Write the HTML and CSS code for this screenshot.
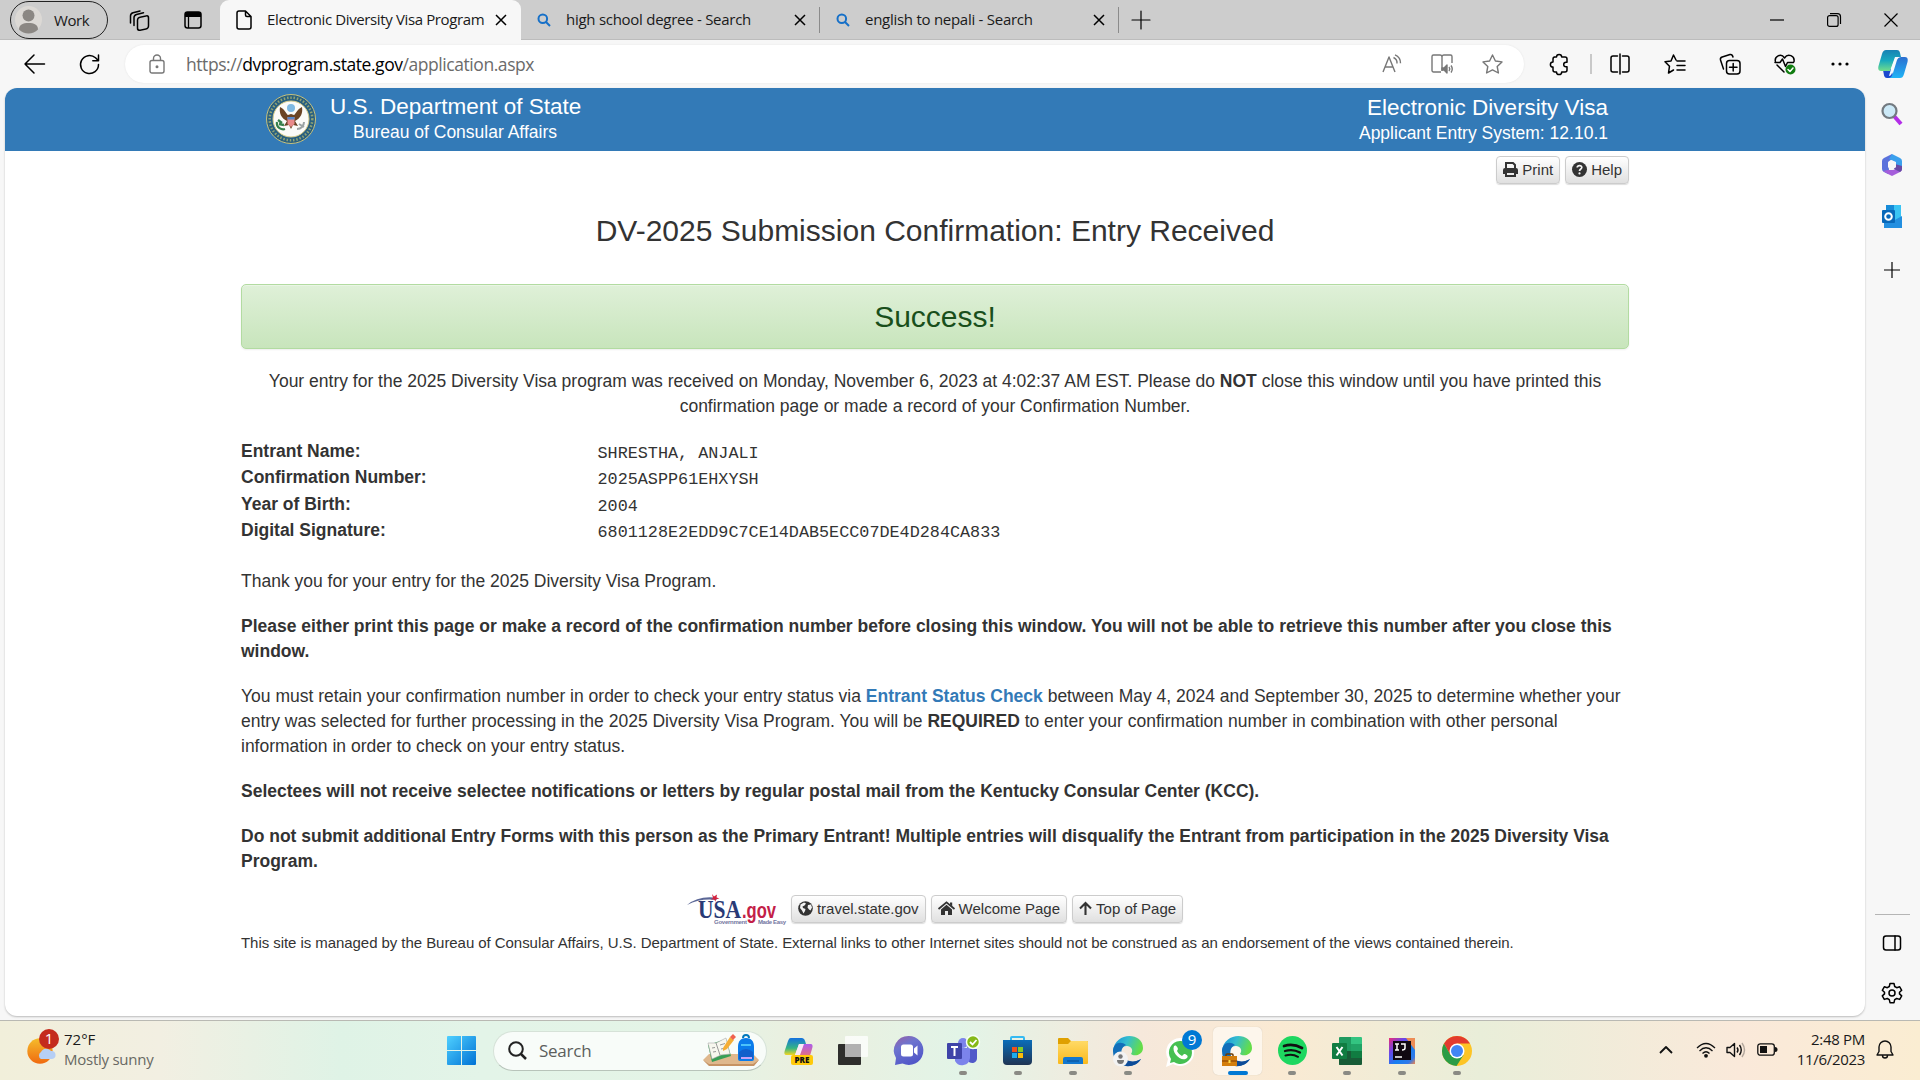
FILE: index.html
```html
<!DOCTYPE html>
<html lang="en">
<head>
<meta charset="utf-8">
<title>Electronic Diversity Visa Program</title>
<link rel="stylesheet" href="styles.css">
</head>
<body>
<div class="desktop">
  <header class="tabbar">
    <div class="profile">
      <svg width="27" height="27" viewBox="0 0 27 27"><circle cx="13.500" cy="13.500" r="13.500" fill="#dcd9d5"/><circle cx="13.500" cy="9.500" r="6" fill="#8b8783"/><path d="M4 23.500c0-5 4-6.500 9.500-6.500s9.500 1.500 9.500 6.500a13.500 13.500 0 0 1-19 0z" fill="#8b8783"/></svg>
      <span>Work</span>
    </div>
    <svg class="workspaces line" width="22" height="20" viewBox="0 0 22 20"><rect x="8.500" y="6" width="11" height="13" rx="2.500" transform="skewY(-12) translate(0 3.500)"/><path d="M5 15.500V7.500c0-1.500 1-2.500 2.500-3l7-1.700M1.500 13V6c0-1.500 1-2.700 2.500-3.200l7-1.800" /></svg>
    <svg class="tabmenu" width="18" height="18" viewBox="0 0 18 18"><rect x="1" y="1" width="16" height="16" rx="2.500" fill="none" stroke="#000" stroke-width="1.500"/><path d="M1 3a2 2 0 0 1 2-2h12a2 2 0 0 1 2 2v3H1z"/><path d="M4.500 6v11" stroke="#000" stroke-width="1.300"/></svg>
    <div class="tab active">
      <svg class="line" width="16" height="20" viewBox="0 0 16 20"><path d="M3 1h6.500L15 6.500V17a2 2 0 0 1-2 2H3a2 2 0 0 1-2-2V3a2 2 0 0 1 2-2zM9.500 1v4a1.500 1.500 0 0 0 1.500 1.500h4"/></svg>
      <span class="t1">Electronic Diversity Visa Program</span>
      <svg class="close" width="12" height="12" viewBox="0 0 12 12"><path d="M1 1l10 10M11 1L1 11"/></svg>
    </div>
    <div class="tab">
      <svg class="lens" width="14" height="14" viewBox="0 0 14 14"><circle cx="5.800" cy="5.800" r="4.300"/><path d="M9 9l4 4"/></svg>
      <span class="t2">high school degree - Search</span>
      <svg class="close" width="12" height="12" viewBox="0 0 12 12"><path d="M1 1l10 10M11 1L1 11"/></svg>
    </div>
    <div class="tab">
      <svg class="lens" width="14" height="14" viewBox="0 0 14 14"><circle cx="5.800" cy="5.800" r="4.300"/><path d="M9 9l4 4"/></svg>
      <span class="t3">english to nepali - Search</span>
      <svg class="close" width="12" height="12" viewBox="0 0 12 12"><path d="M1 1l10 10M11 1L1 11"/></svg>
    </div>
    <svg class="newtab line" width="18" height="18" viewBox="0 0 18 18"><path d="M9 0v18M0 9h18"/></svg>
    <div class="winctl">
      <svg class="thin" width="14" height="14" viewBox="0 0 14 14"><path d="M0 7h14"/></svg>
      <svg class="thin" width="14" height="14" viewBox="0 0 14 14"><rect x=".6" y="2.600" width="10.500" height="10.800" rx="2"/><path d="M3 .7h7.500a3 3 0 0 1 3 3V11"/></svg>
      <svg class="thin" width="14" height="14" viewBox="0 0 14 14"><path d="M.5.500l13 13M13.500.500l-13 13"/></svg>
    </div>
  </header>

  <div class="toolbar">
    <svg class="back line" width="21" height="20" viewBox="0 0 21 20"><path d="M20.500 10H1M10 1L1 10l9 9"/></svg>
    <svg class="reload line" width="21" height="21" viewBox="0 0 21 21"><path d="M19.500 10.500a9 9 0 1 1-3-6.700l2.500 2.500M19.500 1v5.700h-5.700"/></svg>
    <div class="address">
      <svg class="lock gray" width="16" height="20" viewBox="0 0 16 20"><rect x="1" y="6.500" width="14" height="12.500" rx="2"/><path d="M4.500 6.500V4.500a3.500 3.500 0 0 1 7 0v2"/><circle cx="8" cy="12.700" r=".8" fill="#555"/></svg>
      <span class="url">https://<b>dvprogram.state.gov</b>/application.aspx</span>
      <div class="addr-icons">
        <svg class="gray" width="20" height="20" viewBox="0 0 20 20"><path d="M1 18L7 3l6 15M3 13h8M11.500 3.500a6 6 0 0 1 3.500 6M13 .8a9 9 0 0 1 5.500 8.500"/></svg>
        <svg class="gray" width="22" height="20" viewBox="0 0 22 20"><path d="M10 18H2.500A1.500 1.500 0 0 1 1 16.500v-14A1.500 1.500 0 0 1 2.500 1H9q2 0 2 2v14M11 3q0-2 2-2h6.500A1.500 1.500 0 0 1 21 2.500V9"/><path d="M11 14h2l3-3v8l-3-3h-2z" fill="#777"/><path d="M18 13q1.500 2 0 4M20 11.500q2.500 3.500 0 7"/></svg>
        <svg class="gray" width="21" height="20" viewBox="0 0 21 20"><path d="M10.500 1l2.900 6 6.600.9-4.800 4.600 1.200 6.500-5.900-3.100L4.600 19l1.200-6.500L1 7.900 7.600 7z"/></svg>
      </div>
    </div>
    <div class="actions">
      <svg class="line" width="22" height="22" viewBox="0 0 22 22"><path d="M6 4h2.500a2.600 2.600 0 0 1 5.200 0H17a2 2 0 0 1 2 2v3.200h-1a2.300 2.300 0 0 0 0 4.600h1V17a2 2 0 0 1-2 2h-3.300a2.600 2.600 0 0 1-5.200 0H7a2 2 0 0 1-2-2v-2.900a2.600 2.600 0 0 1 0-5.200V6a2 2 0 0 1 2-2"/></svg>
      <i class="vsep"></i>
      <svg class="line split" width="22" height="22" viewBox="0 0 22 22"><path d="M8.500 3H4a2 2 0 0 0-2 2v12a2 2 0 0 0 2 2h4.500M13.500 3H18a2 2 0 0 1 2 2v12a2 2 0 0 1-2 2h-4.500M11 1v20"/></svg>
      <svg class="line" width="22" height="22" viewBox="0 0 22 22"><path d="M12 7L9.500 2 7 8l-6 .7 4.500 4.500L4.500 20l5-3M13 8h8M13 12.500h8M13 17h8"/></svg>
      <svg class="line" width="22" height="22" viewBox="0 0 22 22"><rect x="7.500" y="7.500" width="13.500" height="13.500" rx="3"/><path d="M14.200 10.500v7.500M10.500 14.200h7.500M4.500 16L1.500 7a2.500 2.500 0 0 1 1.700-3L11 1.500c1.500-.3 2.500.5 3 2.500"/></svg>
      <svg class="line" width="22" height="22" viewBox="0 0 22 22"><path d="M10 19L3 12M1.500 9C0 3.500 7-.5 10.500 5 14-.5 21 3 20 8.500M1 9.500h5L8.500 6l3 7.500 2-4h6"/><circle cx="16.500" cy="16.500" r="5" fill="#107c10" stroke="none"/><path d="M14 16.500l2 2 3-3.500" stroke="#fff"/></svg>
      <svg width="22" height="22" viewBox="0 0 22 22"><circle cx="4" cy="11" r="1.600"/><circle cx="11" cy="11" r="1.600"/><circle cx="18" cy="11" r="1.600"/></svg>
    </div>
    <svg class="copilot" width="30" height="28" viewBox="0 0 30 28"><defs><linearGradient id="cA" x1="0" y1="0" x2="0" y2="1"><stop offset="0" stop-color="#1681b4"/><stop offset=".5" stop-color="#17a9be"/><stop offset="1" stop-color="#72dd8b"/></linearGradient><linearGradient id="cB" x1="0" y1="0" x2="0" y2="1"><stop offset="0" stop-color="#2b6fd0"/><stop offset="1" stop-color="#20b4f6"/></linearGradient></defs><path d="M9 28c-3 0-3-3-4-8l8-1 3 9z" fill="#1b49cf"/><path d="M8 0h11c3 0 3 3 4 7h-6l-5 14H3c-3 0-3-3-2.500-5L4 4c1-3 2-4 4-4z" fill="url(#cA)"/><path d="M22 28H10c3 0 4-2 5-5l4-13c1-2 2-3 4-3h4c3 0 3 3 2.500 5L26 24c-1 3-2 4-4 4z" fill="url(#cB)"/><path d="M17.500 7H23c-3 0-4 1-5 4l-4 12c-.7 2-1.500 3-3 3l2-7z" fill="#f4fbff"/></svg>
  </div>

  <div class="middle">
    <main class="page">
      <div class="banner">
        <svg class="seal" width="50" height="50" viewBox="0 0 50 50"><circle cx="25" cy="25" r="24.500" fill="#285f80" stroke="#c7c27d"/><circle cx="25" cy="25" r="21.300" fill="none" stroke="#8fa374" stroke-width="2.500" stroke-dasharray="1.500 1.800"/><circle cx="25" cy="25" r="18" fill="#fbfbf8" stroke="#d8cc86"/><path d="M22 21c-2-1-3-6-8-8-1 6 1 11 7 14l-3 5 5-1 2 4 2-4 5 1-3-5c6-3 8-8 7-14-5 2-6 7-8 8l-3-1z" fill="#6a4425"/><circle cx="25" cy="14" r="4" fill="#7fb9e2"/><path d="M21.500 23h7v7l-3.500 3-3.500-3z" fill="#e98b8b"/><path d="M21.500 23h7v2.500h-7z" fill="#5687c9"/><path d="M11 28c-1 6 5 8 8 7M13 30l5 1M12 26l4 3" stroke="#36804b" stroke-width="2.300" fill="none"/><path d="M31 35c4 0 7-3 7-7M33 30l5 3" stroke="#9ba3a3" stroke-width="2" fill="none"/></svg>
        <div class="dept"><div class="big">U.S. Department of State</div><div class="small">Bureau of Consular Affairs</div></div>
        <div class="sys"><div class="big">Electronic Diversity Visa</div><div class="small">Applicant Entry System: 12.10.1</div></div>
      </div>
      <div class="container">
        <div class="tools">
          <a class="btn"><svg width="15" height="15" viewBox="0 0 15 15"><path d="M3 6V1h7l2 2v3" fill="none" stroke="#333" stroke-width="2"/><path d="M2 6h11a2 2 0 0 1 2 2v4h-2.500v-2h-10v2H0V8a2 2 0 0 1 2-2z" fill="#333"/><path d="M3 10h9v4H3z" fill="none" stroke="#333" stroke-width="2"/></svg>Print</a>
          <a class="btn"><svg width="15" height="15" viewBox="0 0 15 15"><circle cx="7.500" cy="7.500" r="7.500" fill="#333"/><path d="M5.200 5.500c.3-2.700 4.800-2.500 4.600 0-.1 1.500-2.200 1.500-2.300 3.500" fill="none" stroke="#f5f5f5" stroke-width="1.700"/><circle cx="7.500" cy="11.400" r="1.100" fill="#f5f5f5"/></svg>Help</a>
        </div>
        <h1>DV-2025 Submission Confirmation: Entry Received</h1>
        <div class="alert">Success!</div>
        <p class="center">Your entry for the 2025 Diversity Visa program was received on Monday, November 6, 2023 at 4:02:37 AM EST. Please do <b>NOT</b> close this window until you have printed this<br>confirmation page or made a record of your Confirmation Number.</p>
        <dl class="details">
          <dt>Entrant Name:</dt><dd>SHRESTHA, ANJALI</dd>
          <dt>Confirmation Number:</dt><dd>2025ASPP61EHXYSH</dd>
          <dt>Year of Birth:</dt><dd>2004</dd>
          <dt>Digital Signature:</dt><dd>6801128E2EDD9C7CE14DAB5ECC07DE4D284CA833</dd>
        </dl>
        <p>Thank you for your entry for the 2025 Diversity Visa Program.</p>
        <p><b>Please either print this page or make a record of the confirmation number before closing this window. You will not be able to retrieve this number after you close this<br>window.</b></p>
        <p>You must retain your confirmation number in order to check your entry status via <a class="link">Entrant Status Check</a> between May 4, 2024 and September 30, 2025 to determine whether your<br>entry was selected for further processing in the 2025 Diversity Visa Program. You will be <b>REQUIRED</b> to enter your confirmation number in combination with other personal<br>information in order to check on your entry status.</p>
        <p><b>Selectees will not receive selectee notifications or letters by regular postal mail from the Kentucky Consular Center (KCC).</b></p>
        <p><b>Do not submit additional Entry Forms with this person as the Primary Entrant! Multiple entries will disqualify the Entrant from participation in the 2025 Diversity Visa<br>Program.</b></p>
        <div class="links">
          <svg class="usagov" width="99" height="32" viewBox="0 0 99 32"><path d="M0 12Q12 2 31 5L29 7Q14 5 0 12z" fill="#5b6796"/><path d="M25 1l2 2.500 3-2-.5 3 3 1-3.500.8-.5 2.500-1.500-2.500-3 .5 2-2z" fill="#d4213d"/><text x="11" y="25" class="usa" textLength="43" lengthAdjust="spacingAndGlyphs">USA</text><text x="55" y="25" class="gov" textLength="34" lengthAdjust="spacingAndGlyphs">.gov</text><text x="27" y="31" class="tiny" textLength="33">Government</text><text x="71" y="31" class="tiny" textLength="28">Made Easy</text></svg>
          <a class="btn"><svg width="15" height="15" viewBox="0 0 15 15"><circle cx="7.500" cy="7.500" r="7.300" fill="#333"/><path d="M2.500 3.500L6 1.500l2 1-1.500 2-2 1 .5 1.500 2.500 1-.5 2-1.500 2.500L4 9.500 2 7zM10 4l3-.5 1 3-1.500 3-1.500-1-1.500-2z" fill="#f2f2f2"/></svg>travel.state.gov</a>
          <a class="btn"><svg width="17" height="15" viewBox="0 0 17 15"><path d="M.5 8L8.500 1.300 16.500 8" fill="none" stroke="#333" stroke-width="1.800"/><path d="M12 1.500h2.200v4L12 3.500zM3 8.500l5.500-4.700L14 8.500V14h-4v-4H7v4H3z" fill="#333"/></svg>Welcome Page</a>
          <a class="btn"><svg width="13" height="15" viewBox="0 0 13 15"><path d="M6.500 14V2M1 7.500L6.500 2 12 7.500" fill="none" stroke="#333" stroke-width="2.100"/></svg>Top of Page</a>
        </div>
        <p class="managed">This site is managed by the Bureau of Consular Affairs, U.S. Department of State. External links to other Internet sites should not be construed as an endorsement of the views contained therein.</p>
      </div>
    </main>
    <aside class="sidebar">
      <svg width="24" height="24" viewBox="0 0 24 24"><path d="M14 14l7 8" stroke="#b32de8" stroke-width="4"/><circle cx="9.500" cy="9" r="7" fill="#cce9f7" stroke="#737a80" stroke-width="2.200"/></svg>
      <svg width="24" height="24" viewBox="0 0 24 24"><path d="M12 1L4 5q-2 1-2 3v8q0 2 2 3l4 2 1-4-1-8 4-3z" fill="#5a72dc"/><path d="M12 1l8 4q2 1 2 3v7l-6-3V9L9 6z" fill="#3ba0ed"/><path d="M3 18l5-1 5 0 9-3v2q0 2-2 3l-8 4-4-2z" fill="#a55edb"/><path d="M15 11l7 2v3q0 2-2 3l-6-3z" fill="#684aa5"/><path d="M12 7.500l4 2.300v4.400l-4 2.300-4-2.300V9.800z" fill="#f7f7f7"/></svg>
      <svg width="24" height="24" viewBox="0 0 24 24"><rect x="6" y="1" width="15" height="15" fill="#3ac4f4"/><path d="M6 1h8v8H6z" fill="#168bd8"/><path d="M4 12l9 5 9-5v12H4z" fill="#238fe0"/><rect x="2" y="6" width="13" height="13" rx="1" fill="#0868b9"/><circle cx="8.500" cy="12.500" r="3.300" fill="none" stroke="#fff" stroke-width="2"/></svg>
      <svg class="thin" width="16" height="16" viewBox="0 0 16 16"><path d="M8 0v16M0 8h16"/></svg>
      <i class="hsep"></i>
      <svg class="line" width="20" height="16" viewBox="0 0 20 16"><rect x="1.500" y="1" width="17" height="14" rx="2.500"/><path d="M13 1v14"/></svg>
      <svg class="line" width="22" height="22" viewBox="0 0 22 22"><path d="M9 1.500h4l.7 3 2 1.200 3-.9 2 3.500-2.200 2v1.600l2.200 2-2 3.500-3-.9-2 1.200-.7 3H9l-.7-3-2-1.200-3 .9-2-3.500 2.200-2v-1.600l-2.200-2 2-3.500 3 .9 2-1.200z"/><circle cx="11" cy="11" r="3"/></svg>
    </aside>
  </div>

  <footer class="taskbar">
    <div class="weather">
      <svg width="34" height="36" viewBox="0 0 34 36"><defs><linearGradient id="sun" x1="0" y1="0" x2="0" y2="1"><stop offset="0" stop-color="#f5bd2c"/><stop offset="1" stop-color="#f06a10"/></linearGradient></defs><circle cx="13" cy="22" r="12.700" fill="url(#sun)"/><path d="M14 30a4 4 0 0 1 0-7 6 6 0 0 1 10-1 4 4 0 0 1 1 8z" fill="#b6cff5"/><circle cx="22" cy="10" r="10" fill="#c42b1c"/><text x="22" y="15" class="badge">1</text></svg>
      <div class="report"><div class="temp">72°F</div><div class="cond">Mostly sunny</div></div>
    </div>
    <div class="apps">
      <div class="app"><svg width="29" height="29" viewBox="0 0 29 29"><defs><linearGradient id="win" x1="0" y1="0" x2="1" y2="1"><stop offset="0" stop-color="#4fd0ff"/><stop offset="1" stop-color="#0072d5"/></linearGradient></defs><path d="M1 0h13v14H0V1a1 1 0 0 1 1-1zM15 0h13a1 1 0 0 1 1 1v13H15zM0 15h14v14H1a1 1 0 0 1-1-1zM15 15h14v13a1 1 0 0 1-1 1H15z" fill="url(#win)"/></svg></div>
      <div class="search">
        <svg width="19" height="19" viewBox="0 0 19 19"><circle cx="8" cy="8" r="6.800" fill="none" stroke="#222" stroke-width="2"/><path d="M13 13l5 5" stroke="#222" stroke-width="2.500"/></svg>
        <span>Search</span>
        <svg width="56" height="33" viewBox="0 0 56 33"><path d="M0 26l6-6h44l6 6-5 5H6z" fill="#dfb88d"/><path d="M0 26l6 4h44l6-4-5 6H6z" fill="#c69364"/><path d="M5 11l18-6 5 17-19 6z" fill="#379f55"/><path d="M5 9l8 0 10-5 4 16-9 1-9 4z" fill="#f7f7ee" stroke="#aaa" stroke-width=".6"/><path d="M13 9l4 12M9 14l3-.5M10 18l3-.5M17 11l5-1.500M18 15l5-1" stroke="#999"/><path d="M20 14l7-11 4 3-7 9-4 2z" fill="#f5ae35"/><path d="M27 3l3-3 3 3-3 3z" fill="#ef6251"/><path d="M35 13c0-6 3-9 8-9s8 3 8 9v12q0 2-2 2H37q-2 0-2-2z" fill="#0a7bea"/><path d="M40 4c0-4 6-4 6 0" fill="none" stroke="#07b" stroke-width="2"/><path d="M36 18q7-6 14 0v7H36z" fill="#125fcb"/><path d="M38 24h11" stroke="#c9a2f5" stroke-width="2"/><path d="M38 11h10" stroke="#4bc2fa" stroke-width="2"/></svg>
      </div>
      <div class="app"><svg width="29" height="29" viewBox="0 0 29 29"><defs><linearGradient id="p1" x1="0" y1="0" x2="0" y2="1"><stop offset="0" stop-color="#1470df"/><stop offset=".6" stop-color="#35b585"/><stop offset="1" stop-color="#f4d621"/></linearGradient><linearGradient id="p2" x1="0" y1="0" x2="0" y2="1"><stop offset="0" stop-color="#ad5ceb"/><stop offset="1" stop-color="#f17564"/></linearGradient></defs><path d="M7 2h11c2 0 3 2 4 6h-7l-4 11H3c-3 0-3-2-2-5L4 5c1-2 1-3 3-3z" fill="url(#p1)"/><path d="M18 8h8c3 0 3 2 2 5l-3 10H12z" fill="url(#p2)"/><path d="M15 8h5l-4 11h-5z" fill="#fae9f8"/><rect x="7" y="19" width="22" height="10" rx="2" fill="#ffca0a"/><text x="18" y="27.300" class="pre">PRE</text></svg></div>
      <div class="app"><svg width="30" height="29" viewBox="0 0 30 29"><rect y="8" width="23" height="21" rx="1" fill="#2e2e2c"/><rect x="7" width="23" height="21" rx="1" fill="#fff" fill-opacity=".75"/><path d="M7 8h16v13H7z" fill="#aaa" fill-opacity=".8"/></svg></div>
      <div class="app"><svg width="29" height="29" viewBox="0 0 29 29"><defs><linearGradient id="ch" x1="0" y1="0" x2=".5" y2="1"><stop offset="0" stop-color="#9a5fa5"/><stop offset=".4" stop-color="#6d74cf"/><stop offset="1" stop-color="#5257c8"/></linearGradient></defs><path d="M14.500 0a14.500 14.500 0 1 1-6 27.500L1 29l1-7A14.500 14.500 0 0 1 14.500 0z" fill="url(#ch)"/><rect x="7" y="8.500" width="12" height="12" rx="2.500" fill="#fff"/><path d="M20 12.500l3.500-3v10l-3.500-3z" fill="#fff"/></svg></div>
      <div class="app run"><svg width="34" height="32" viewBox="0 0 34 32"><circle cx="17" cy="8" r="5" fill="#7b83eb"/><circle cx="25" cy="11" r="4" fill="#5059c9"/><path d="M20 14h11v9c0 6-7 6-9 3z" fill="#5059c9"/><path d="M9 13h15v10a8 8 0 0 1-15 3z" fill="#7b83eb"/><rect x="1" y="8" width="15" height="16" rx="1" fill="#3e43a8"/><path d="M5 12h7M8.500 12v9" stroke="#fff" stroke-width="2"/><circle cx="27" cy="7" r="6.500" fill="#85b918" stroke="#f7fff7" stroke-width="1.500"/><path d="M24 7l2.500 2.500 4-4.500" fill="none" stroke="#fff" stroke-width="1.800"/></svg></div>
      <div class="app run"><svg width="29" height="29" viewBox="0 0 29 29"><defs><linearGradient id="st" x1="0" y1="0" x2="0" y2="1"><stop offset="0" stop-color="#0a6db9"/><stop offset="1" stop-color="#1f3453"/></linearGradient></defs><path d="M8 6V2q0-1 1-1h11q1 0 1 1v4" fill="none" stroke="#35baf2" stroke-width="2"/><path d="M0 4h29v21q0 4-4 4H4q-4 0-4-4z" fill="url(#st)"/><path d="M9 11h5v5H9z" fill="#f1511b"/><path d="M15 11h5v5h-5z" fill="#80cc28"/><path d="M9 17h5v5H9z" fill="#1cacee"/><path d="M15 17h5v5h-5z" fill="#fbbc09"/></svg></div>
      <div class="app run"><svg width="30" height="28" viewBox="0 0 30 28"><defs><linearGradient id="fo" x1="0" y1="0" x2="0" y2="1"><stop offset="0" stop-color="#ffda66"/><stop offset="1" stop-color="#fab91c"/></linearGradient></defs><path d="M0 2q0-1 1-1h9l3 3h16q1 0 1 1v6H0z" fill="#dfa000"/><path d="M0 7h10l3-3h16q1 0 1 1v21q0 1-1 1H1q-1 0-1-1z" fill="url(#fo)"/><path d="M5 27v-5q0-2 2-2h16q2 0 2 2v5z" fill="#1378d0"/><path d="M9 24h12" stroke="#0a4d91"/></svg></div>
      <div class="app run"><svg width="30" height="30" viewBox="0 0 30 30"><defs><linearGradient id="eg" x1="0" y1="0" x2="1" y2=".3"><stop offset="0" stop-color="#138cd8"/><stop offset=".5" stop-color="#35bdcf"/><stop offset="1" stop-color="#64dd49"/></linearGradient></defs><path d="M0 15C2-5 30-4 30 12c0 7-9 9-12 6 3-4 0-8-4-8-6 0-8 5-8 10z" fill="url(#eg)"/><path d="M0 15c0-7 7-11 13-6-5 2-6 8-3 13 4 5 11 5 18 1-3 5-8 7-13 7C6 30 0 24 0 15z" fill="#126eb9"/><path d="M10 20c3 6 12 7 18 3-3 5-9 8-15 7-3-2-4-6-3-10z" fill="#0d4b98"/><circle cx="7.500" cy="23" r="7.500" fill="#f3f3f3"/><circle cx="7.500" cy="20.500" r="2.200" fill="#777"/><path d="M4 24h7q0 4-3.500 4T4 24z" fill="#777"/></svg></div>
      <div class="app"><svg width="38" height="38" viewBox="0 0 38 38"><path d="M16 6a14 14 0 1 1-7 26l-7 3 2-8A14 14 0 0 1 16 6z" fill="#fff"/><path d="M16 9a11.500 11.500 0 1 1-6 21l-4 1 1-4a11.500 11.500 0 0 1 9-18z" fill="#46c052"/><path d="M10 14c2-2 4 2 4 3l-1 2c1 2 3 4 5 5l2-2c2 0 5 2 3 4-5 5-16-5-13-12z" fill="#fff"/><circle cx="28" cy="8" r="10" fill="#0078d4"/><text x="28" y="13" class="badge">9</text></svg></div>
      <div class="app run current"><svg width="30" height="30" viewBox="0 0 30 30"><path d="M0 15C2-5 30-4 30 12c0 7-9 9-12 6 3-4 0-8-4-8-6 0-8 5-8 10z" fill="url(#eg)"/><path d="M0 15c0-7 7-11 13-6-5 2-6 8-3 13 4 5 11 5 18 1-3 5-8 7-13 7C6 30 0 24 0 15z" fill="#126eb9"/><path d="M10 20c3 6 12 7 18 3-3 5-9 8-15 7-3-2-4-6-3-10z" fill="#0d4b98"/><path d="M4 20v-1q0-1 1-1h5q1 0 1 1v1" fill="none" stroke="#6b3b05" stroke-width="1.500"/><rect y="20" width="15" height="10" fill="#d47e0c"/><path d="M0 25h15" stroke="#9b5206" stroke-width="1.500"/><rect x="6.500" y="24" width="2" height="3" fill="#ffde4b"/></svg></div>
      <div class="app run"><svg width="29" height="29" viewBox="0 0 29 29"><circle cx="14.500" cy="14.500" r="14.500" fill="#1ed760"/><g fill="none" stroke="#111" stroke-linecap="round"><path d="M6 10q9-3 18 2" stroke-width="2.700"/><path d="M7 15q8-2.500 15 1.500" stroke-width="2.300"/><path d="M7.500 19.500q7-2 12.500 1.300" stroke-width="2"/></g></svg></div>
      <div class="app run"><svg width="30" height="28" viewBox="0 0 30 28"><path d="M8 0h11v28H8q-1 0-1-1V1q0-1 1-1z" fill="#1f9a60"/><path d="M19 0h10q1 0 1 1v6H19z" fill="#33c481"/><path d="M19 7h11v7H19z" fill="#21a366"/><path d="M7 14h12v7H7z" fill="#185c37"/><path d="M19 14h11v7H19z" fill="#107c41"/><path d="M7 21h23v6q0 1-1 1H8q-1 0-1-1z" fill="#185c37"/><rect y="6" width="15" height="16" rx="1" fill="#107c41"/><path d="M4.500 10l6 8.500M10.500 10l-6 8.500" stroke="#fff" stroke-width="2"/></svg></div>
      <div class="app run"><svg width="26" height="26" viewBox="0 0 26 26"><defs><linearGradient id="ij" x1="0" y1="0" x2="1" y2="1"><stop offset="0" stop-color="#ec2c77"/><stop offset=".3" stop-color="#6c45e8"/><stop offset=".6" stop-color="#167ff0"/><stop offset=".85" stop-color="#3279e9"/><stop offset="1" stop-color="#fa8545"/></linearGradient></defs><path d="M0 0h26v26H0z" fill="url(#ij)"/><path d="M17 0h9v12z" fill="#ed8d56"/><path d="M4 3h18v19H4z" fill="#100811"/><path d="M6 6h4M8 6v6M6 12h4M12 6h4v4q0 2-3 2M6 19h7" fill="none" stroke="#fff" stroke-width="1.500"/></svg></div>
      <div class="app run"><svg width="30" height="30" viewBox="0 0 30 30"><circle cx="15" cy="15" r="15" fill="#fdc425"/><path d="M2 7.500A15 15 0 0 1 28 7.500H15L8.500 19z" fill="#e33b2e"/><path d="M2 7.500A15 15 0 0 0 14.500 30l7-11-13 0z" fill="#2b9c46"/><circle cx="15" cy="15" r="7.500" fill="#fff"/><circle cx="15" cy="15" r="6" fill="#4285f4"/></svg></div>
    </div>
    <div class="tray">
      <svg class="tr" width="14" height="9" viewBox="0 0 14 9"><path d="M1 8l6-6 6 6" stroke-width="1.800"/></svg>
      <svg class="tr wifi" width="20" height="16" viewBox="0 0 20 16"><path d="M1 6q9-9 18 0M3.500 9q6.500-6.500 13 0M6.500 11.500q3.500-3.500 7 0" stroke-width="1.300"/><circle cx="10" cy="13.800" r="1.900" fill="#111" stroke="none"/></svg>
      <svg class="tr vol" width="20" height="16" viewBox="0 0 20 16"><path d="M1 5.500h3L8.500 1.500v13L4 10.500H1z"/><path d="M11 5.500q2 2.500 0 5M13.500 3q3.500 5 0 10"/><path d="M16 1q5 7 0 14" opacity=".3"/></svg>
      <svg class="tr bat" width="21" height="13" viewBox="0 0 21 13"><rect x=".8" y=".8" width="16.500" height="11.400" rx="2.500" stroke-width="1.300"/><rect x="3" y="3" width="7" height="7" fill="#111" stroke="none"/><path d="M18 4q2.500 0 2.500 2.500T18 9z" fill="#111" stroke="none"/></svg>
      <div class="clock"><div>2:48 PM</div><div>11/6/2023</div></div>
      <svg class="tr bell" width="18" height="19" viewBox="0 0 18 19"><path d="M9 1a6 6 0 0 0-6 6v4.500L1 15h16l-2-3.500V7a6 6 0 0 0-6-6zM6.500 15.500a2.500 2.500 0 0 0 5 0"/></svg>
    </div>
  </footer>
</div>
</body>
</html>
```
FILE: styles.css
```css
* { box-sizing: border-box; }
body { margin: 0; background: #f7f7f7; overflow: hidden; }
svg { display: block; flex: none; overflow: visible; }
.desktop { width: 1920px; height: 1080px; display: flex; flex-direction: column; font-family: "Open Sans", "Noto Sans", sans-serif; color: #1a1a1a; }
.line { fill: none; stroke: #000; stroke-width: 1.5; stroke-linecap: round; stroke-linejoin: round; }
.thin { fill: none; stroke: #000; stroke-width: 1.2; }
.gray { fill: none; stroke: #777; stroke-width: 1.4; stroke-linejoin: round; }

.tabbar { height: 40px; flex: none; background: #cdcdcd; box-shadow: inset 0 -1px #bcbcbc; display: flex; align-items: center; font-size: 15px; }
.profile { width: 98px; height: 38px; margin: 0 0 1px 10px; border: 1.6px solid #222; border-radius: 19px; display: flex; align-items: center; padding-left: 4px; gap: 12px; letter-spacing: -.4px; }
.workspaces { margin-left: 21px; }
.tabmenu { margin-left: 33px; }
.tab { width: 299px; height: 26px; display: flex; align-items: center; padding: 0 13px 0 16px; border-right: 1px solid #8b8b8b; white-space: nowrap; }
.tab span { flex: 1; margin-left: 15px; padding-bottom: 2px; }
.tab.active { width: 301px; height: 40px; margin-left: 18px; background: #f7f7f7; border: 0; border-radius: 9px 9px 0 0; padding: 0 14px 0 16px; }
.t1 { letter-spacing: -.37px; }
.t2 { letter-spacing: -.27px; }
.t3 { letter-spacing: -.27px; }
.close { fill: none; stroke: #000; stroke-width: 1.5; }
.lens { fill: none; stroke: #1670c8; stroke-width: 2; }
.newtab { margin-left: 13px; stroke-width: 1.2; }
.winctl { margin-left: auto; display: flex; gap: 43px; padding-right: 22px; }

.toolbar { height: 48px; flex: none; display: flex; align-items: center; background: #f7f7f7; }
.back { margin-left: 24px; }
.reload { margin-left: 34px; }
.address { width: 1399px; height: 38px; margin-left: 25px; background: #fff; border-radius: 19px; display: flex; align-items: center; padding: 0 21px 0 24px; box-shadow: 0 0 2px #e2e2e2; }
.url { margin-left: 21px; padding-bottom: 1px; font-size: 17.5px; letter-spacing: -.44px; color: #6b6b6b; }
.url b { font-weight: 400; color: #000; }
.addr-icons { margin-left: auto; display: flex; gap: 29px; }
.actions { margin-left: 24px; display: flex; align-items: center; gap: 33px; }
.vsep { width: 2px; height: 20px; background: #c9c9c9; margin: 0 -11px 0 -13px; }
.split { margin-left: -5px; }
.copilot { margin-left: 27px; }

.middle { height: 932px; flex: none; display: flex; background: #f7f7f7; padding: 0 0 4px 5px; }
.page { width: 1860px; height: 928px; background: #fff; border-radius: 12px; overflow: hidden; box-shadow: 0 1px 2px #bbb; font: 17.5px/25px "Liberation Sans", Arial, sans-serif; color: #333; }
.banner { height: 63px; background: #337ab7; color: #fff; display: flex; padding: 6px 257px 0 261px; }
.big { font-size: 22.500px; line-height: 26px; }
.small { line-height: 24px; }
.dept { margin-left: 14px; }
.dept .small { margin-left: 23px; }
.sys { margin-left: auto; text-align: right; padding-top: 1px; }
.container { width: 1388px; margin-left: 236px; }
.tools { display: flex; justify-content: flex-end; gap: 5px; padding-top: 5px; }
.btn { height: 28px; display: flex; align-items: center; gap: 4px; padding: 0 6px 1px 6px; border: 1px solid #ccc; border-radius: 4px; background: linear-gradient(#fff, #e0e0e0); box-shadow: 0 1px 1px #ddd; font-size: 15px; white-space: nowrap; }
h1 { font-size: 30px; line-height: 33px; font-weight: 400; text-align: center; margin: 30px 0 37px; }
.alert { height: 65px; border: 1px solid #b2dba1; border-radius: 5px; background: linear-gradient(#dff0d8, #c8e5bc); box-shadow: inset 0 1px #e9f5e4, 0 1px 2px #eee; text-align: center; font-size: 30px; line-height: 63px; color: #194f1b; }
p { margin: 0 0 20px; white-space: nowrap; }
.center { text-align: center; margin: 20px 0 20px; }
.details { display: grid; grid-template-columns: 356.5px 1fr; grid-auto-rows: 26.4px; margin: 0 0 24px; }
dt { font-weight: 700; }
dd { margin: 0; font: 16.8px/29px "Liberation Mono", monospace; }
.link { color: #337ab7; font-weight: 700; }
.links { display: flex; gap: 5px; align-items: center; justify-content: center; margin-top: -1px; }
.managed { font-size: 15px; line-height: 21px; letter-spacing: -.057px; margin: 7px 0 0; }
.usa { font: 700 25px "Liberation Serif", serif; fill: #293a76; }
.gov { font: 700 22px "Liberation Sans", sans-serif; fill: #c32047; }
.tiny { font: 700 6px "Liberation Sans", sans-serif; fill: #7476a0; }

.sidebar { width: 55px; display: flex; flex-direction: column; align-items: center; padding: 14px 1px 0 0; }
.sidebar svg:nth-of-type(2), .sidebar svg:nth-of-type(3) { margin-top: 27px; }
.sidebar svg:nth-of-type(4) { margin-top: 34px; }
.hsep { width: 35px; height: 1px; background: #b5b5b5; margin-top: auto; }
.sidebar svg:nth-of-type(5) { margin-top: 20px; }
.sidebar svg:nth-of-type(6) { margin: 31px 0 12px; }

.taskbar { height: 60px; flex: none; border-top: 1px solid #b9b9b3; display: flex; align-items: center; background: linear-gradient(90deg, #f1efda, #f2efe2 160px, #dff3e6 340px, #e3f4e8 480px, #e4f4e6 700px, #ebefdf 810px, #e2f4e7 960px, #f6e8db 1140px, #faead3 1280px, #e9eed9 1480px, #fae9da 1740px, #faedd2); }
.weather { width: 434px; padding-left: 27px; display: flex; align-items: center; gap: 3px; font-size: 15px; line-height: 20px; }
.weather svg { margin-bottom: 8px; }
.report { padding-bottom: 4px; }
.cond { color: #686863; letter-spacing: -.25px; }
.badge { font: 15px "Open Sans", sans-serif; fill: #fff; text-anchor: middle; }
.pre { font: 800 8px "Open Sans", sans-serif; fill: #111; text-anchor: middle; }
.apps { display: flex; align-items: center; }
.app { width: 54.9px; height: 48px; display: grid; place-items: center; position: relative; }
.run::after { content: ""; position: absolute; left: 23.500px; bottom: 0; width: 8px; height: 4px; border-radius: 2px; background: #8a8a84; }
.current::before { content: ""; position: absolute; inset: 0 3px; border-radius: 5px; background: #fdf6ec; box-shadow: 0 0 1px #c8bfae; }
.current svg { position: relative; }
.current::after { width: 20px; left: 17.500px; background: #0078d4; }
.search { width: 274px; height: 40px; margin: 0 4px; border-radius: 20px; background: #f8fcf9; border: 1px solid #d6e2d8; border-bottom-color: #b8c4ba; display: flex; align-items: center; padding: 0 7px 0 14px; font-size: 17px; letter-spacing: -.2px; color: #5c5f5d; }
.search span { flex: 1; margin-left: 12px; padding-bottom: 1px; }
.tray { margin-left: auto; display: flex; align-items: center; padding: 0 26px 2px 0; }
.tr { fill: none; stroke: #111; stroke-width: 1.4; stroke-linejoin: round; }
.wifi { margin-left: 23px; }
.vol { margin-left: 10px; }
.bat { margin-left: 11px; }
.clock { width: 87px; padding-bottom: 2px; text-align: right; font-size: 15px; line-height: 20px; letter-spacing: -.3px; }
.bell { margin-left: 11px; }
```
